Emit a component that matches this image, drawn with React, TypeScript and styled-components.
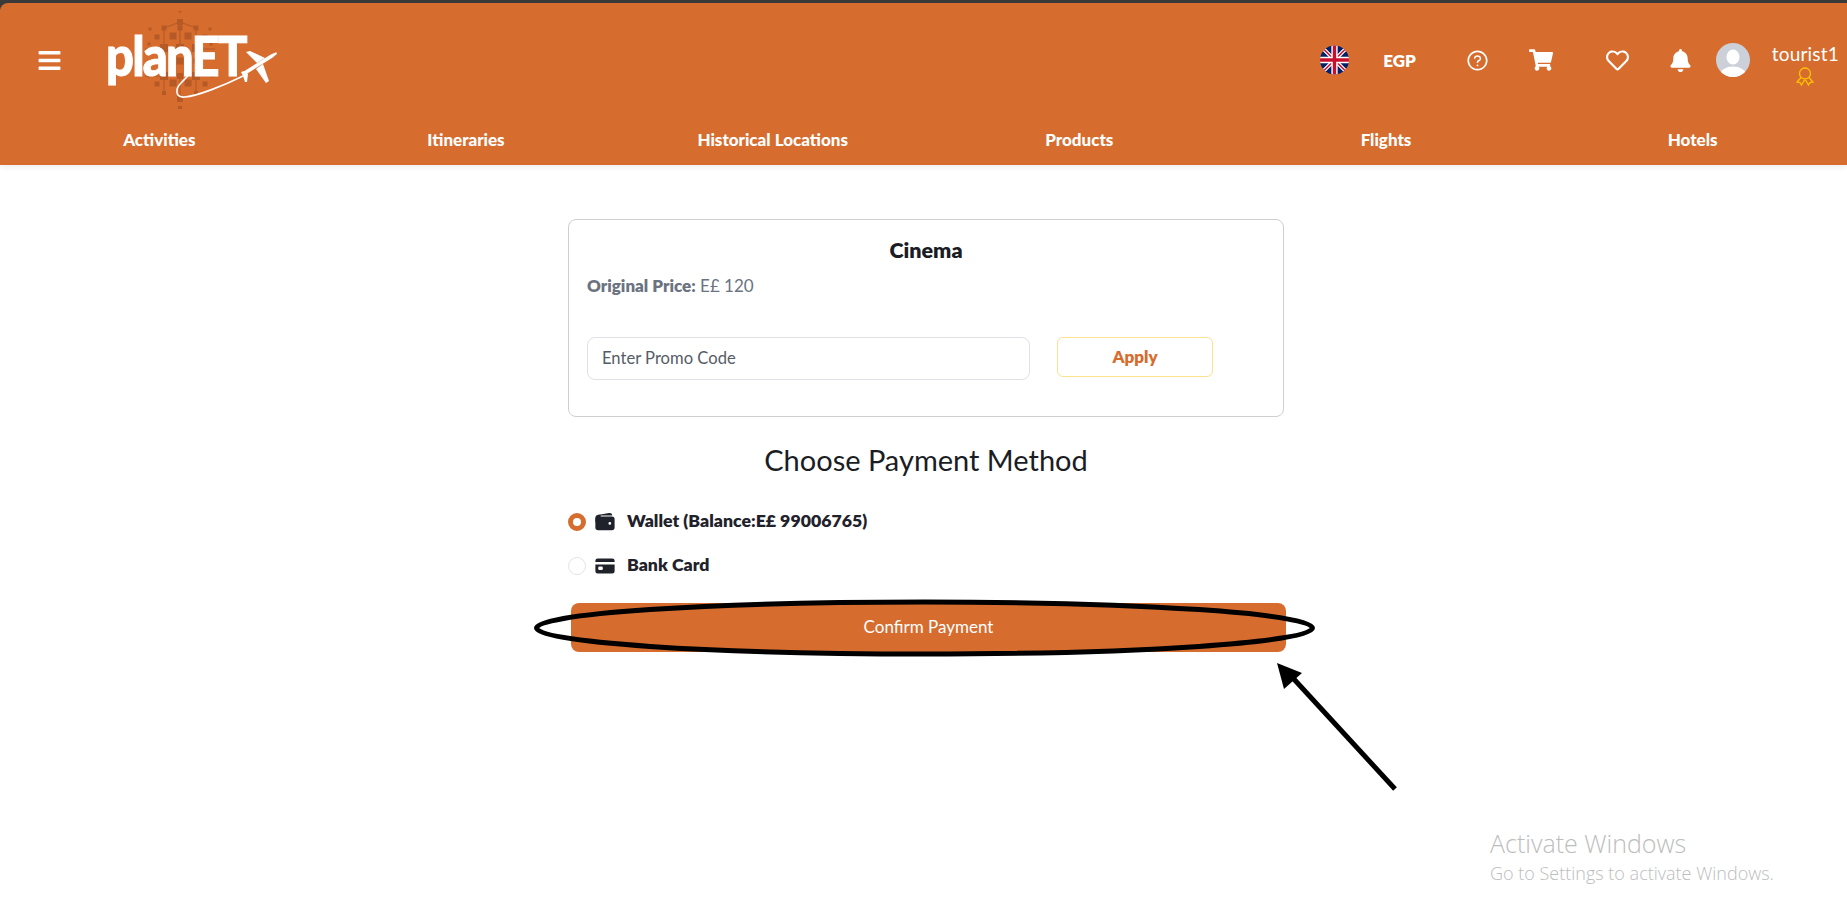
import styled, { createGlobalStyle } from "styled-components";
import { FaBars, FaBell, FaRegHeart, FaShoppingCart } from "react-icons/fa";
import { AiOutlineQuestionCircle } from "react-icons/ai";
import { IoCard, IoWallet } from "react-icons/io5";

const GlobalStyle = createGlobalStyle`
  body {
    margin: 0;
    background: #fff;
    font-family: "Lato", "Open Sans", sans-serif;
    color: #1a1d24;
  }
`;

const Page = styled.div`
  position: relative;
  width: 100%;
  height: 923px;
  overflow: hidden;
  background: #fff;
`;

const TopEdge = styled.div`
  height: 10px;
  margin-bottom: -7px;
  background: #3b3b3b;
`;

const Header = styled.header`
  position: relative;
  height: 162px;
  display: flex;
  flex-direction: column;
  background: #d66d2f;
  border-top-left-radius: 8px;
  box-shadow: 0 2px 6px rgba(0, 0, 0, 0.08);
  color: #fff;
`;

const TopRow = styled.div`
  height: 114px;
  display: flex;
  align-items: center;
  padding: 0 8px 0 37px;
`;

const Burger = styled.button`
  display: flex;
  padding: 0;
  border: 0;
  background: none;
  color: #fff;
  font-size: 25px;
`;

const Logo = styled.div`
  position: relative;
  width: 175px;
  height: 98px;
  margin-left: 43px;
  flex-shrink: 0;
`;

const LogoArt = styled.svg`
  position: absolute;
  left: 0;
  top: 0;
`;

const LogoText = styled.span`
  position: absolute;
  left: 1px;
  top: 8px;
  font-size: 55px;
  line-height: 72px;
  font-weight: 900;
  letter-spacing: -2px;
  -webkit-text-stroke: 1px #fff;
  transform: scaleX(0.89);
  transform-origin: left center;
  color: #fff;
`;

const Tools = styled.div`
  margin-left: auto;
  display: flex;
  align-items: center;
`;

const Tool = styled.div<{ $gap: number; $size?: number }>`
  display: flex;
  align-items: center;
  margin-left: ${(p) => p.$gap}px;
  font-size: ${(p) => p.$size ?? 22}px;
`;

const Currency = styled.span`
  font-size: 17px;
  font-weight: 800;
`;

const User = styled.div`
  display: flex;
  flex-direction: column;
  align-items: center;
  margin-left: 22px;
  margin-top: 6px;
`;

const UserName = styled.span`
  font-size: 19px;
  line-height: 26px;
  letter-spacing: 0.2px;
`;

const NavRow = styled.nav`
  display: grid;
  grid-template-columns: repeat(6, 1fr);
  padding: 0 1px 0 6px;
  height: 44px;
`;

const NavItem = styled.a`
  display: flex;
  align-items: center;
  justify-content: center;
  font-size: 17px;
  font-weight: 900;
  color: #fff;
`;

const Main = styled.main`
  width: 716px;
  margin: 54px auto 0;
  padding-left: 5px;
`;

const Card = styled.section`
  box-sizing: border-box;
  width: 716px;
  height: 198px;
  padding: 16px 18px;
  border: 1px solid #cfcfcf;
  border-radius: 8px;
`;

const Title = styled.h2`
  margin: 0;
  font-size: 21.5px;
  line-height: 28px;
  font-weight: 800;
  text-align: center;
  color: #1a1d24;
`;

const Price = styled.p`
  margin: 12px 0 0;
  font-size: 17px;
  line-height: 20px;
  color: #6b7280;
`;

const PriceLabel = styled.b`
  font-weight: 800;
`;

const PromoRow = styled.div`
  display: flex;
  align-items: flex-start;
  gap: 27px;
  margin-top: 41px;
`;

const PromoInput = styled.div`
  box-sizing: border-box;
  width: 443px;
  height: 43px;
  display: flex;
  align-items: center;
  padding: 0 14px 2px;
  border: 1px solid #dfe1e5;
  border-radius: 8px;
  font-size: 16.6px;
  color: #565c66;
`;

const ApplyButton = styled.button`
  box-sizing: border-box;
  width: 156px;
  height: 40px;
  padding-bottom: 3px;
  border: 1px solid #fde28f;
  border-radius: 6px;
  background: #fff;
  color: #d66d2f;
  font-family: inherit;
  font-size: 17px;
  font-weight: 800;
`;

const Heading = styled.h3`
  margin: 23px 0 0;
  font-size: 29px;
  line-height: 40px;
  font-weight: 400;
  text-align: center;
  color: #1a1d24;
`;

const Methods = styled.div`
  display: flex;
  flex-direction: column;
  gap: 26px;
  margin-top: 33px;
`;

const Method = styled.label`
  display: flex;
  align-items: center;
  height: 18px;
  font-size: 17.7px;
  font-weight: 800;
  color: #1f222b;
`;

const MethodText = styled.span`
  margin-top: -4px;
`;

const Radio = styled.span<{ $checked?: boolean }>`
  box-sizing: border-box;
  width: 18px;
  height: 18px;
  margin-right: 8px;
  border-radius: 50%;
  background: #fff;
  border: ${(p) => (p.$checked ? "5px solid #d66d2f" : "1px solid #e2e4e8")};
`;

const MethodIcon = styled.span`
  display: flex;
  margin-right: 11px;
  font-size: 22px;
  color: #1f222b;
`;

const ConfirmButton = styled.button`
  display: block;
  width: 715px;
  height: 49px;
  margin: 28px 0 0 3px;
  padding-bottom: 3px;
  border: 0;
  border-radius: 8px;
  background: #d66d2f;
  color: #fff;
  font-family: inherit;
  font-size: 17px;
`;

const Annotation = styled.svg`
  position: absolute;
  left: 0;
  top: 0;
  pointer-events: none;
`;

const Watermark = styled.div`
  position: absolute;
  left: 1490px;
  top: 827px;
  font-family: "Open Sans", "Liberation Sans", sans-serif;
  color: #bdbdbd;
`;

const WatermarkTitle = styled.div`
  font-size: 25px;
  line-height: 33px;
  font-weight: 300;
`;

const WatermarkHint = styled.div`
  font-size: 18px;
  line-height: 26px;
  font-weight: 300;
`;

const navItems = ["Activities", "Itineraries", "Historical Locations", "Products", "Flights", "Hotels"];

const circuitSquares: [number, number, number][] = [
  [75, 0, 3], [75, 11, 6], [75, 17, 5], [59, 17, 5], [91, 17, 5], [45, 18, 3], [105, 18, 3],
  [52, 26, 5], [68, 25, 7], [83, 25, 7], [100, 26, 5], [44, 33, 3], [59, 37, 8], [75, 37, 8],
  [91, 37, 8], [106, 33, 3], [75, 50, 7], [91, 50, 5], [44, 65, 3], [59, 65, 8], [75, 65, 6],
  [91, 65, 8], [107, 65, 3], [52, 73, 5], [68, 72, 7], [83, 72, 7], [100, 73, 5], [59, 82, 4],
  [91, 82, 4], [75, 88, 6], [75, 97, 4],
];

const circuitLines = [
  "M75 11 L59 17 M75 11 L91 17 M75 11 V38",
  "M59 17 V72 M91 17 V72",
  "M40 38 H59 M91 38 H110",
  "M40 65 H59 M91 65 H110",
  "M75 65 V88 M59 72 L59 82 M91 72 L91 82",
];

function LogoMark() {
  return (
    <Logo>
      <LogoArt width="175" height="98" viewBox="0 0 175 98">
        <path d={circuitLines.join(" ")} stroke="#b55a26" strokeWidth="1.2" fill="none" />
        {circuitSquares.map(([x, y, s]) => (
          <rect key={`${x}-${y}`} x={x - s / 2} y={y - s / 2} width={s} height={s} fill="#b55a26" />
        ))}
      </LogoArt>
      <LogoText>planET</LogoText>
      <LogoArt width="175" height="98" viewBox="0 0 175 98">
        <path
          d="M138 65 C118 75 92 85 80 86 C70 87 70 78 76 72 C79 69 82 66 85 62"
          stroke="#fff"
          strokeWidth="1.6"
          fill="none"
        />
        <path d="M140 64 L167 47 C171 44 172 43 172 42 C171 41 169 42 165 44 L138 61 Z" fill="#fff" />
        <path d="M141 41 L145 40 L160 47 L152 52 Z" fill="#fff" />
        <path d="M151 58 L158 53 L164 70 L161 72 Z" fill="#fff" />
        <path d="M136 61 L139 60 L143 63 L142 71 L140 71 L138 65 Z" fill="#fff" />
      </LogoArt>
    </Logo>
  );
}

function UkFlag() {
  return (
    <svg width="29" height="30" viewBox="0 0 30 30">
      <defs>
        <clipPath id="flag-clip">
          <circle cx="15" cy="15" r="15" />
        </clipPath>
      </defs>
      <g clipPath="url(#flag-clip)">
        <rect width="30" height="30" fill="#012169" />
        <path d="M0 0 L30 30 M30 0 L0 30" stroke="#fff" strokeWidth="4" />
        <path d="M0 0 L30 30 M30 0 L0 30" stroke="#c8102e" strokeWidth="1.6" />
        <path d="M15 0 V30 M0 15 H30" stroke="#fff" strokeWidth="6.5" />
        <path d="M15 0 V30 M0 15 H30" stroke="#c8102e" strokeWidth="3.5" />
      </g>
    </svg>
  );
}

function Avatar() {
  return (
    <svg width="34" height="34" viewBox="0 0 34 34">
      <defs>
        <clipPath id="avatar-clip">
          <circle cx="17" cy="17" r="17" />
        </clipPath>
      </defs>
      <g clipPath="url(#avatar-clip)">
        <rect width="34" height="34" fill="#cbd0d9" />
        <ellipse cx="17" cy="14" rx="6.5" ry="7.5" fill="#fff" />
        <ellipse cx="17" cy="32" rx="13" ry="8.5" fill="#fff" />
      </g>
    </svg>
  );
}

function Medal() {
  return (
    <svg width="18" height="19" viewBox="0 0 18 19" fill="none" stroke="#ffc400" strokeWidth="1.3">
      <circle cx="9" cy="6.5" r="5.5" />
      <path d="M5 10.5 L1 15 L4 15.5 L5.5 18 L8.5 13" />
      <path d="M13 10.5 L17 15 L14 15.5 L12.5 18 L9.5 13" />
    </svg>
  );
}

export default function App() {
  return (
    <Page>
      <GlobalStyle />
      <TopEdge />
      <Header>
        <TopRow>
          <Burger aria-label="Menu">
            <FaBars />
          </Burger>
          <LogoMark />
          <Tools>
            <Tool $gap={0}>
              <UkFlag />
            </Tool>
            <Tool $gap={34}>
              <Currency>EGP</Currency>
            </Tool>
            <Tool $gap={50} $size={23}>
              <AiOutlineQuestionCircle />
            </Tool>
            <Tool $gap={40} $size={24}>
              <FaShoppingCart />
            </Tool>
            <Tool $gap={53} $size={23}>
              <FaRegHeart />
            </Tool>
            <Tool $gap={40} $size={23}>
              <FaBell />
            </Tool>
            <Tool $gap={24}>
              <Avatar />
            </Tool>
            <User>
              <UserName>tourist1</UserName>
              <Medal />
            </User>
          </Tools>
        </TopRow>
        <NavRow>
          {navItems.map((item) => (
            <NavItem key={item}>{item}</NavItem>
          ))}
        </NavRow>
      </Header>
      <Main>
        <Card>
          <Title>Cinema</Title>
          <Price>
            <PriceLabel>Original Price:</PriceLabel> E£ 120
          </Price>
          <PromoRow>
            <PromoInput>Enter Promo Code</PromoInput>
            <ApplyButton>Apply</ApplyButton>
          </PromoRow>
        </Card>
        <Heading>Choose Payment Method</Heading>
        <Methods>
          <Method>
            <Radio $checked />
            <MethodIcon>
              <IoWallet />
            </MethodIcon>
            <MethodText>Wallet (Balance:E£ 99006765)</MethodText>
          </Method>
          <Method>
            <Radio />
            <MethodIcon>
              <IoCard />
            </MethodIcon>
            <MethodText>Bank Card</MethodText>
          </Method>
        </Methods>
        <ConfirmButton>Confirm Payment</ConfirmButton>
      </Main>
      <Annotation width="1847" height="923" viewBox="0 0 1847 923">
        <ellipse cx="924.5" cy="628" rx="388" ry="26" fill="none" stroke="#000" strokeWidth="5" />
        <path d="M1395 789 L1292 677" stroke="#000" strokeWidth="5" fill="none" />
        <path d="M1277 663 L1302 673 L1284 689 Z" fill="#000" />
      </Annotation>
      <Watermark>
        <WatermarkTitle>Activate Windows</WatermarkTitle>
        <WatermarkHint>Go to Settings to activate Windows.</WatermarkHint>
      </Watermark>
    </Page>
  );
}
